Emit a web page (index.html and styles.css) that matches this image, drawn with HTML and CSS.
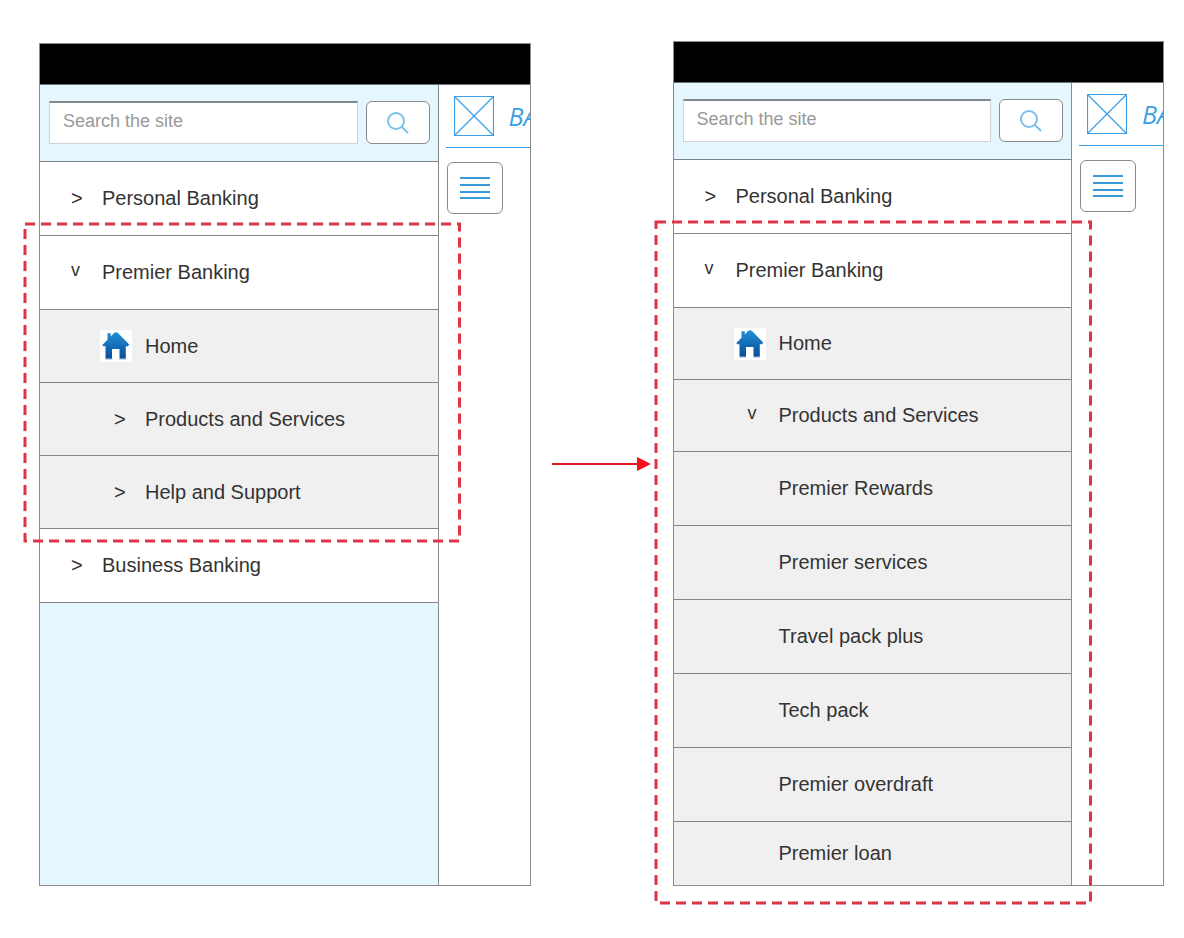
FILE: index.html
```html
<!DOCTYPE html>
<html lang="en">
<head>
    <meta charset="UTF-8">
    <meta name="viewport" content="width=device-width, initial-scale=1.0">
    <title>Mobile Menu - Premier Banking</title>
    <link rel="stylesheet" href="styles.css">
</head>
<body>
    <!-- Shared icons -->
    <svg class="sprite" aria-hidden="true">
        <defs>
            <linearGradient id="roof" x1="0" y1="0" x2="0" y2="1">
                <stop offset="0" stop-color="#2090d4"/>
                <stop offset="1" stop-color="#0a4c9c"/>
            </linearGradient>
        </defs>
        <symbol id="icon-search" viewBox="0 0 24 24">
            <circle cx="10" cy="10" r="8" fill="none" stroke="#7cc0ec" stroke-width="2"/>
            <path d="M15.5 15.5 L22 22" stroke="#7cc0ec" stroke-width="2"/>
        </symbol>
        <symbol id="icon-home" viewBox="0 0 32 32">
            <rect width="32" height="32" fill="#fff"/>
            <path d="M2.300 15 L7.500 9.800 V3.200 H10.800 V6.500 L14 3 Q16 1.600 18 3 L29.200 14.500 L28 16.200 H25.800 V28.800 H19.500 V19 H12 V28.800 H5.500 V16.200 H3.200 Z" fill="url(#roof)"/>
            <path d="M5 29.300 H12.500 M19 29.300 H26.500" stroke="#b9cbe0"/>
        </symbol>
        <symbol id="icon-menu" viewBox="0 0 30 24">
            <path d="M0 2 H30 M0 9 H30 M0 16 H30 M0 22 H30" stroke="#3a9ad9" stroke-width="2"/>
        </symbol>
        <symbol id="icon-logo" viewBox="0 0 40 40">
            <path d="M0.500 0.500 H39.500 V39.500 H0.500 Z M0.500 0.500 L39.500 39.500 M39.500 0.500 L0.500 39.500" fill="none" stroke="#3a9fe6" stroke-width="1.200"/>
        </symbol>
    </svg>

    <main class="flow">
        <section class="phone phone-closed">
            <div class="status-bar"></div>
            <div class="screen">
                <div class="drawer">
                    <form class="search">
                        <input type="text" class="search-input" placeholder="Search the site" aria-label="Search the site">
                        <button type="button" class="icon-button search-button" aria-label="Search"><svg><use href="#icon-search"/></svg></button>
                    </form>
                    <nav>
                        <button class="row" aria-expanded="false"><span class="arrow">&gt;</span>Personal Banking</button>
                        <div class="group">
                            <button class="row" aria-expanded="true"><span class="arrow arrow-down">v</span>Premier Banking</button>
                            <a href="#" class="row sub home"><svg class="home-icon"><use href="#icon-home"/></svg>Home</a>
                            <button class="row sub" aria-expanded="false"><span class="arrow">&gt;</span>Products and Services</button>
                            <button class="row sub" aria-expanded="false"><span class="arrow">&gt;</span>Help and Support</button>
                            <svg class="callout"><rect width="100%" height="100%"/></svg>
                        </div>
                        <button class="row" aria-expanded="false"><span class="arrow">&gt;</span>Business Banking</button>
                    </nav>
                </div>
                <div class="page">
                    <div class="brand"><svg class="logo"><use href="#icon-logo"/></svg>BA</div>
                    <button class="icon-button menu-button" aria-label="Menu"><svg><use href="#icon-menu"/></svg></button>
                </div>
            </div>
        </section>

        <div class="step">
            <svg viewBox="0 0 100 16">
                <path d="M0 8 H88" stroke="#e0172b" stroke-width="2"/>
                <path d="M85 1 L99 8 L85 15 Z" fill="#fb1020"/>
            </svg>
        </div>

        <section class="phone phone-open">
            <div class="status-bar"></div>
            <div class="screen">
                <div class="drawer">
                    <form class="search">
                        <input type="text" class="search-input" placeholder="Search the site" aria-label="Search the site">
                        <button type="button" class="icon-button search-button" aria-label="Search"><svg><use href="#icon-search"/></svg></button>
                    </form>
                    <nav>
                        <button class="row" aria-expanded="false"><span class="arrow">&gt;</span>Personal Banking</button>
                        <div class="group">
                            <button class="row" aria-expanded="true"><span class="arrow arrow-down">v</span>Premier Banking</button>
                            <a href="#" class="row sub home"><svg class="home-icon"><use href="#icon-home"/></svg>Home</a>
                            <button class="row sub" aria-expanded="true"><span class="arrow arrow-down">v</span>Products and Services</button>
                            <a href="#" class="row leaf">Premier Rewards</a>
                            <a href="#" class="row leaf">Premier services</a>
                            <a href="#" class="row leaf">Travel pack plus</a>
                            <a href="#" class="row leaf">Tech pack</a>
                            <a href="#" class="row leaf">Premier overdraft</a>
                            <a href="#" class="row leaf last">Premier loan</a>
                            <svg class="callout"><rect width="100%" height="100%"/></svg>
                        </div>
                    </nav>
                </div>
                <div class="page">
                    <div class="brand"><svg class="logo"><use href="#icon-logo"/></svg>BA</div>
                    <button class="icon-button menu-button" aria-label="Menu"><svg><use href="#icon-menu"/></svg></button>
                </div>
            </div>
        </section>
    </main>
</body>
</html>
```

FILE: styles.css
```css
* {
    box-sizing: border-box;
}
body {
    font-family: "Liberation Sans", Arial, sans-serif;
    font-size: 20px;
    color: #333333;
    background: #ffffff;
    margin: 0;
}
.sprite {
    position: absolute;
    width: 0;
    height: 0;
}
.flow {
    display: flex;
    padding: 41px 20px 40px 39px;
}
.phone {
    flex: 1;
    min-width: 0;
    display: flex;
    flex-direction: column;
    border: 1px solid #8c8c8c;
}
.phone-closed {
    margin-top: 2px;
}
.status-bar {
    height: 41px;
    background: #000000;
    border-bottom: 1px solid #6a7376;
}
.screen {
    flex: 1;
    display: flex;
}
.drawer {
    flex: 1;
    background: #e5f6fe;
    border-right: 1px solid #8c8c8c;
}

/* Search */
.search {
    display: flex;
    gap: 8px;
    padding: 16px 8px 17px 9px;
    border-bottom: 1px solid #7d8488;
}
.search-input {
    flex: 1;
    min-width: 0;
    height: 43px;
    padding: 0 13px 3px;
    font-family: inherit;
    font-size: 18px;
    background: #ffffff;
    border: 1px solid #ccd5da;
    border-top: 2px solid #82888c;
    border-radius: 0;
}
.search-input::placeholder {
    color: #999999;
    opacity: 1;
}
.icon-button {
    display: flex;
    align-items: center;
    justify-content: center;
    padding: 0;
    background: #ffffff;
    border: 1px solid #8a8a8a;
    border-radius: 6px;
}
.search-button {
    width: 64px;
    height: 43px;
}
.search-button svg {
    width: 24px;
    height: 24px;
}

/* Menu rows */
.row {
    display: flex;
    align-items: center;
    width: 100%;
    height: 74px;
    padding: 0 0 0 31px;
    font-family: inherit;
    font-size: 20px;
    text-align: left;
    text-decoration: none;
    color: #333333;
    background: #ffffff;
    border: 0;
    border-bottom: 1px solid #858585;
}
.arrow {
    width: 31px;
    font-size: 20px;
}
.arrow-down {
    font-size: 18px;
    padding-bottom: 4px;
}
.sub {
    height: 73px;
    padding-left: 74px;
    background: #f0f0f0;
}
.home {
    padding-left: 60px;
}
.home-icon {
    width: 32px;
    height: 32px;
    margin-right: 13px;
}
.leaf {
    padding-left: 105px;
    background: #f0f0f0;
}
.phone-open .sub {
    height: 72px;
}
.phone-open .last {
    height: 63px;
    border-bottom: 0;
}

/* Dashed outline round the open group */
.group {
    position: relative;
}
.callout {
    position: absolute;
    top: -12px;
    left: -15px;
    width: calc(100% + 37px);
    height: calc(100% + 24px);
    overflow: visible;
    pointer-events: none;
    z-index: 1;
}
.callout rect {
    fill: none;
    stroke: #dc3545;
    stroke-width: 3;
    stroke-dasharray: 10 6;
}
.phone-open .callout {
    left: -18px;
    height: calc(100% + 30px);
}

/* Page behind the drawer */
.page {
    width: 91px;
    padding-left: 7px;
    overflow: hidden;
}
.brand {
    display: flex;
    align-items: center;
    gap: 15px;
    height: 63px;
    padding-left: 8px;
    font-family: "Open Sans", sans-serif;
    font-size: 25px;
    font-style: italic;
    color: #3a9fe6;
    border-bottom: 1px solid #3a9fe6;
}
.logo {
    flex: none;
    width: 40px;
    height: 40px;
}
.menu-button {
    width: 56px;
    height: 52px;
    margin: 14px 0 0 1px;
}
.menu-button svg {
    width: 30px;
    height: 24px;
}

/* Arrow between the two screens */
.step {
    flex: none;
    display: flex;
    align-items: center;
    justify-content: center;
    width: 142px;
}
.step svg {
    width: 100px;
    height: 16px;
}
```
